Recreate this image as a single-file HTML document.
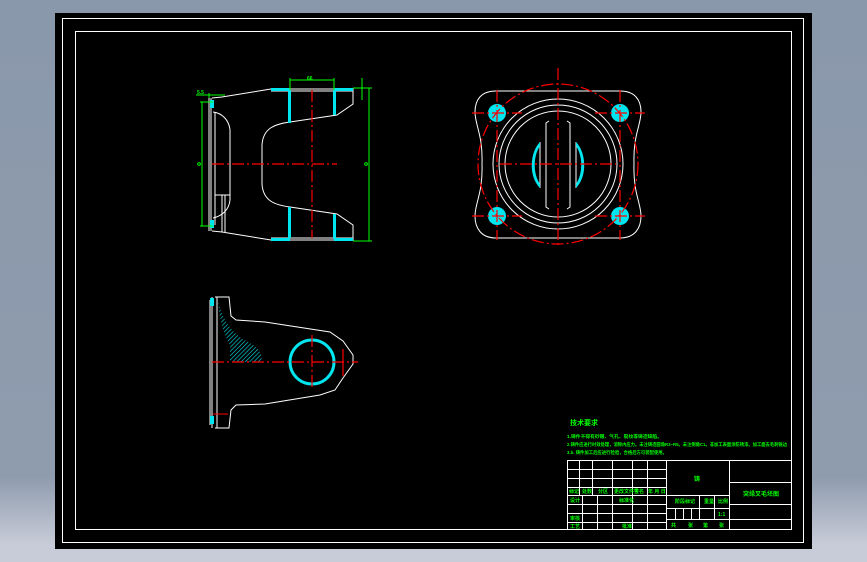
<!DOCTYPE html>
<html><head><meta charset="utf-8"><style>
html,body{margin:0;padding:0;width:867px;height:562px;overflow:hidden;background:linear-gradient(#8a98ab,#8f9cae 85%,#c8ccd8 97%);}
svg{position:absolute;left:0;top:0}
text{font-family:"Liberation Sans","Noto Sans CJK SC",sans-serif;fill:#00ff00;font-weight:bold}
</style></head><body>
<svg width="867" height="562" viewBox="0 0 867 562">
<defs>
<pattern id="h" width="3" height="3" patternUnits="userSpaceOnUse" patternTransform="rotate(45)">
<rect width="3" height="3" fill="#000"/><line x1="0" y1="0" x2="0" y2="3" stroke="#00e5ee" stroke-width="1.2"/>
</pattern>
</defs>
<rect x="55" y="13" width="757" height="536" fill="#000"/>
<rect x="62.5" y="18.5" width="741" height="524" fill="none" stroke="#fff" stroke-width="1"/>
<rect x="75.5" y="31.5" width="716" height="498" fill="none" stroke="#fff" stroke-width="1"/>

<!-- side view -->
<g fill="none" stroke="#fff" stroke-width="1">
<polyline points="212,98 222,97 271,89 353,89 353,104 337,115 290,122"/>
<polyline points="212,231 222,232 271,240 353,240 353,225 337,214 290,207"/>
<line x1="271" y1="91" x2="353" y2="91"/><line x1="271" y1="238" x2="353" y2="238"/>
<path d="M290,122 C275,124 263,128 262,145 L262,184 C263,201 275,205 290,207"/>
<line x1="209" y1="98" x2="209" y2="231"/><line x1="211" y1="98" x2="211" y2="231"/>
<line x1="215" y1="112" x2="215" y2="225"/>
<path d="M213,112 C222,113 229,120 230,130 L230,200 C229,210 222,216 213,218"/>
<line x1="215" y1="195" x2="230" y2="195"/><line x1="222" y1="195" x2="222" y2="232"/><line x1="225" y1="195" x2="225" y2="232"/>
</g>
<g fill="#00e5ee">
<rect x="271" y="88" width="19" height="3"/><rect x="334" y="88" width="19" height="3"/>
<rect x="271" y="238" width="19" height="3"/><rect x="334" y="238" width="19" height="3"/>
<rect x="288" y="90" width="3" height="33"/><rect x="333" y="90" width="3" height="25"/>
<rect x="288" y="207" width="3" height="31"/><rect x="333" y="214" width="3" height="25"/>
<rect x="210" y="100" width="4" height="8"/><rect x="210" y="220" width="4" height="8"/>
</g>
<g stroke="#f00" stroke-width="1.2" stroke-dasharray="12,3,2,3" fill="none">
<line x1="212" y1="164" x2="337" y2="164"/><line x1="312" y1="90" x2="312" y2="238"/>
</g>
<g stroke="#0f0" stroke-width="1" fill="none">
<line x1="369" y1="88" x2="369" y2="241"/><line x1="353" y1="88" x2="372" y2="88"/><line x1="353" y1="241" x2="372" y2="241"/>
<line x1="202" y1="102" x2="202" y2="226"/><line x1="200" y1="102" x2="213" y2="102"/><line x1="200" y1="226" x2="213" y2="226"/>
<line x1="290" y1="80" x2="334" y2="80"/><line x1="290" y1="78" x2="290" y2="90"/><line x1="334" y1="78" x2="334" y2="90"/>
<line x1="196" y1="95" x2="225" y2="95"/><line x1="209" y1="93" x2="209" y2="98"/><line x1="362" y1="78" x2="362" y2="100"/>
</g>
<text x="307" y="80" font-size="5">66</text>
<text x="197" y="94" font-size="5">5.5</text>
<text x="197" y="166" font-size="5">Φ</text>
<text x="364" y="166" font-size="5">Φ</text>

<!-- front view -->
<path d="M496,91 L620,91 C635,91 641,100 641,112 C641,125 633,135 634,164 C633,193 641,203 641,216 C641,228 635,238 620,238 L496,238 C481,238 475,228 475,216 C475,203 483,193 482,164 C483,135 475,125 475,112 C475,100 481,91 496,91 Z" fill="none" stroke="#fff"/>
<g fill="none" stroke="#fff">
<circle cx="558" cy="164" r="65"/><circle cx="558" cy="164" r="59"/><circle cx="558" cy="164" r="53"/>
<path d="M549,121 L546,123 L546,207 L549,209"/><path d="M567,121 L570,123 L570,207 L567,209"/>
<line x1="540" y1="142" x2="540" y2="188"/><line x1="576" y1="142" x2="576" y2="188"/>
</g>
<g fill="#00e5ee">
<path d="M540,142 C530,152 528,176 540,188 L540,184 C533,174 533,156 540,146 Z"/>
<path d="M576,142 C586,152 588,176 576,188 L576,184 C583,174 583,156 576,146 Z"/>
<circle cx="497" cy="113" r="9"/><circle cx="620" cy="113" r="9"/><circle cx="497" cy="216" r="9"/><circle cx="620" cy="216" r="9"/>
</g>
<g stroke="#f00" stroke-width="1.2" fill="none" stroke-dasharray="12,3,2,3">
<circle cx="558" cy="164" r="80"/>
<line x1="558" y1="68" x2="558" y2="247"/><line x1="500" y1="164" x2="616" y2="164"/>
<line x1="472" y1="113" x2="522" y2="113"/><line x1="595" y1="113" x2="645" y2="113"/>
<line x1="472" y1="216" x2="522" y2="216"/><line x1="595" y1="216" x2="645" y2="216"/>
<line x1="497" y1="90" x2="497" y2="240"/><line x1="620" y1="90" x2="620" y2="240"/>
</g>

<!-- bottom view -->
<g fill="none" stroke="#fff">
<polyline points="215,297 229,297 231,316 236,320 265,322 330,332 343,341 353,355 353,364 343,378 335,390 320,395 265,404 236,405 231,410 229,428 215,428"/>
<line x1="210" y1="300" x2="210" y2="425"/><line x1="212" y1="297" x2="212" y2="428"/><line x1="217" y1="297" x2="217" y2="428"/>
</g>
<path d="M218,300 C222,320 232,333 246,341 C256,346 262,350 262,362 L230,362 L230,345 C224,335 219,318 218,300 Z" fill="url(#h)"/>
<circle cx="312" cy="362" r="22" fill="none" stroke="#00e5ee" stroke-width="3"/>
<rect x="210" y="298" width="4" height="8" fill="#00e5ee"/><rect x="210" y="416" width="4" height="8" fill="#00e5ee"/>
<g stroke="#f00" stroke-width="1.2" fill="none" stroke-dasharray="12,3,2,3">
<line x1="212" y1="362" x2="358" y2="362"/><line x1="312" y1="335" x2="312" y2="390"/>
</g>
<line x1="343" y1="349" x2="343" y2="376" stroke="#f00" stroke-width="1.2"/>
<line x1="213" y1="414" x2="228" y2="414" stroke="#f00"/>

<!-- notes -->
<text x="570" y="425" font-size="7">技术要求</text>
<text x="567" y="438" font-size="4.6" textLength="95" lengthAdjust="spacingAndGlyphs">1.铸件不得有砂眼、气孔、裂纹等铸造缺陷。</text>
<text x="567" y="446" font-size="4.6" textLength="220" lengthAdjust="spacingAndGlyphs">2.铸件应进行时效处理，消除内应力。未注铸造圆角R3~R5。未注倒角C1。非加工表面涂防锈漆。加工面去毛刺锐边</text>
<text x="567" y="454" font-size="4.6" textLength="100" lengthAdjust="spacingAndGlyphs">3.b. 铸件加工后应进行检验，合格后方可装配使用。</text>

<!-- title block -->
<g stroke="#fff" stroke-width="1" fill="none">
<rect x="567.5" y="460.5" width="224" height="69"/>
<line x1="666.5" y1="460" x2="666.5" y2="530"/><line x1="729.5" y1="460" x2="729.5" y2="530"/>
<line x1="567" y1="469.5" x2="666" y2="469.5"/><line x1="567" y1="478.5" x2="666" y2="478.5"/><line x1="567" y1="487.5" x2="666" y2="487.5"/>
<line x1="567" y1="495.5" x2="666" y2="495.5"/><line x1="567" y1="504.5" x2="666" y2="504.5"/><line x1="567" y1="513.5" x2="666" y2="513.5"/><line x1="567" y1="522.5" x2="666" y2="522.5"/>
<line x1="579.5" y1="460" x2="579.5" y2="495"/><line x1="592.5" y1="460" x2="592.5" y2="495"/><line x1="612.5" y1="460" x2="612.5" y2="530"/><line x1="632.5" y1="460" x2="632.5" y2="530"/><line x1="647.5" y1="460" x2="647.5" y2="530"/>
<line x1="582.5" y1="495" x2="582.5" y2="530"/><line x1="597.5" y1="495" x2="597.5" y2="530"/>
<line x1="666" y1="495.5" x2="729" y2="495.5"/><line x1="666" y1="508.5" x2="729" y2="508.5"/><line x1="666" y1="519.5" x2="729" y2="519.5"/>
<line x1="699.5" y1="495" x2="699.5" y2="519"/><line x1="714.5" y1="495" x2="714.5" y2="519"/>
<line x1="675.5" y1="508" x2="675.5" y2="519"/><line x1="683.5" y1="508" x2="683.5" y2="519"/><line x1="691.5" y1="508" x2="691.5" y2="519"/>
<line x1="729" y1="482.5" x2="792" y2="482.5"/><line x1="729" y1="504.5" x2="792" y2="504.5"/><line x1="729" y1="519.5" x2="792" y2="519.5"/>
</g>
<g font-size="5">
<text x="569" y="493">标记</text><text x="582" y="493">处数</text><text x="598" y="493">分区</text><text x="614" y="493">更改文件号</text><text x="634" y="493">签名</text><text x="648" y="493">年 月 日</text>
<text x="570" y="502">设计</text><text x="619" y="502">标准化</text><text x="570" y="520">审核</text><text x="570" y="528">工艺</text><text x="622" y="528">批准</text>
<text x="675" y="503">阶段标记</text><text x="704" y="503">重量</text><text x="718" y="503">比例</text><text x="718" y="516">1:1</text>
<text x="671" y="527">共</text><text x="688" y="527">张</text><text x="703" y="527">第</text><text x="719" y="527">张</text>
<text x="743" y="496" font-size="6">突缘叉毛坯图</text>
<text x="694" y="481" font-size="6">铸</text>
</g>
</svg>
</body></html>
